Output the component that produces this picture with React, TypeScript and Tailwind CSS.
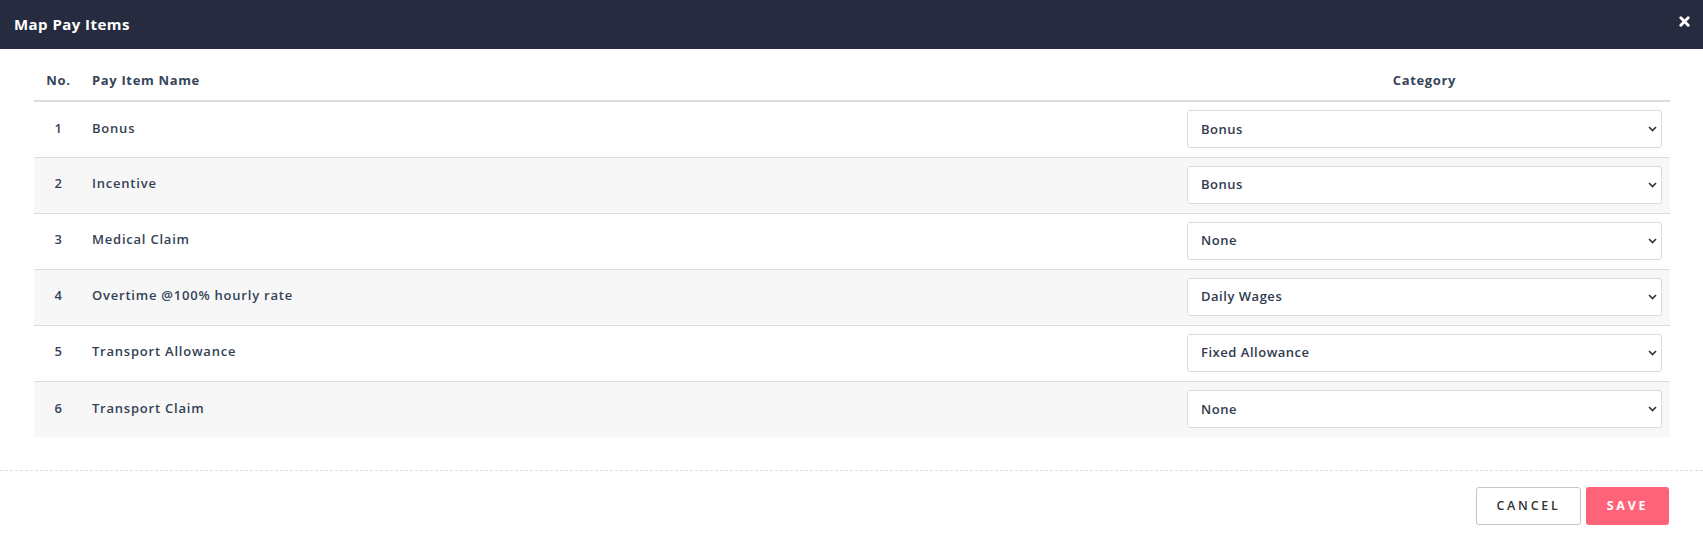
import { useState } from "react";

interface PayItem {
  id: number;
  name: string;
  category: string;
}

const categories = ["None", "Bonus", "Daily Wages", "Fixed Allowance", "Overtime", "Commission"];

const initialItems: PayItem[] = [
  { id: 1, name: "Bonus", category: "Bonus" },
  { id: 2, name: "Incentive", category: "Bonus" },
  { id: 3, name: "Medical Claim", category: "None" },
  { id: 4, name: "Overtime @100% hourly rate", category: "Daily Wages" },
  { id: 5, name: "Transport Allowance", category: "Fixed Allowance" },
  { id: 6, name: "Transport Claim", category: "None" },
];

export default function App() {
  const [items, setItems] = useState<PayItem[]>(initialItems);

  const handleChange = (id: number, value: string) => {
    setItems(prev => prev.map(item => (item.id === id ? { ...item, category: value } : item)));
  };

  return (
    <div className="w-[1703px] h-[560px] bg-white font-['Open_Sans',sans-serif] text-[#354256]">
      {/* modal header */}
      <div className="h-[49px] bg-[#272b40] flex items-center justify-between pl-[14px] pr-[13px]">
        <h2 className="text-white text-[15px] font-bold tracking-[0.03em]">Map Pay Items</h2>
        <button className="text-white -mt-[6px]">
          <svg width="11" height="11" viewBox="0 0 12 12">
            <path d="M2 2 L10 10 M10 2 L2 10" stroke="currentColor" strokeWidth="3.2" strokeLinecap="round" />
          </svg>
        </button>
      </div>

      <div className="px-[34px] pr-[33px] pt-[16px] pb-[33px]">
        <table className="w-full border-collapse">
          <thead>
            <tr className="border-b-2 border-[#dddddd] h-[36px] text-[13px] font-extrabold tracking-[0.05em] text-[#36445a]">
              <th className="w-[49px] text-center align-middle pb-[3px]">No.</th>
              <th className="text-left pl-[9px] align-middle pb-[3px]">Pay Item Name</th>
              <th className="w-[491px] text-center align-middle pb-[3px]">Category</th>
            </tr>
          </thead>
          <tbody>
            {items.map((item, i) => (
              <tr
                key={item.id}
                className={`h-[56px] text-[13px] font-semibold tracking-[0.06em] ${
                  i % 2 === 1 ? "bg-[#f7f7f7]" : "bg-white"
                } ${i < items.length - 1 ? "border-b border-[#dddddd]" : ""}`}
              >
                <td className="text-center align-middle pb-[2px]">{item.id}</td>
                <td className="pl-[9px] align-middle pb-[2px]">{item.name}</td>
                <td className="px-[8px] align-middle">
                  <div className="relative">
                    <select
                      value={item.category}
                      onChange={e => handleChange(item.id, e.target.value)}
                      className="appearance-none w-full h-[38px] bg-white border border-[#dcdcdc] rounded-[3px] pl-[13px] pr-8 text-[13px] font-semibold tracking-[0.04em] text-[#2f3b4e] outline-none"
                    >
                      {categories.map(c => (
                        <option key={c} value={c}>
                          {c}
                        </option>
                      ))}
                    </select>
                    <svg
                      className="absolute right-[5px] top-1/2 -translate-y-1/2 pointer-events-none text-[#333]"
                      width="9"
                      height="6"
                      viewBox="0 0 9 6"
                    >
                      <path d="M1 1 L4.5 4.5 L8 1" fill="none" stroke="currentColor" strokeWidth="1.6" />
                    </svg>
                  </div>
                </td>
              </tr>
            ))}
          </tbody>
        </table>
      </div>

      {/* footer */}
      <div className="border-t border-dashed border-[#dedede] flex justify-end gap-[5px] pt-[16px] pr-[34px]">
        <button className="w-[105px] h-[38px] border border-[#c4c4c4] rounded-[3px] bg-white text-[12.5px] font-semibold tracking-[0.22em] text-[#333]">
          CANCEL
        </button>
        <button className="w-[83px] h-[38px] rounded-[3px] bg-[#ff6379] text-[12.5px] font-bold tracking-[0.22em] text-white">
          SAVE
        </button>
      </div>
    </div>
  );
}
